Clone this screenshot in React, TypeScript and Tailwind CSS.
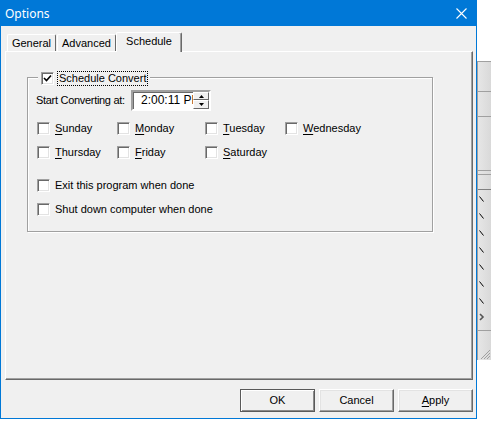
import React from 'react';

function Check({ checked = false }: { checked?: boolean }) {
    return (
        <span className="w-[13px] h-[13px] shrink-0 bg-white border border-t-[#a0a0a0] border-l-[#a0a0a0] border-r-white border-b-white shadow-[inset_1px_1px_0_#696969,inset_-1px_-1px_0_#e3e3e3] flex items-center justify-center">
            {checked && (
                <svg width="9" height="9" viewBox="0 0 9 9">
                    <path d="M1 4 L3.5 6.5 L8 1.5" stroke="#000" strokeWidth="1.6" fill="none" />
                </svg>
            )}
        </span>
    );
}

function Day({ first, rest }: { first: string; rest: string }) {
    return (
        <div className="flex items-center gap-[5px] h-[13px]">
            <Check />
            <span>
                <span className="underline underline-offset-[2px]">{first}</span>
                {rest}
            </span>
        </div>
    );
}

function Button({ children, isDefault = false }: { children: React.ReactNode; isDefault?: boolean }) {
    const edge = isDefault
        ? 'border border-[#5a5a5a] shadow-[inset_1px_1px_0_#fff,inset_-1px_-1px_0_#8a8a8a]'
        : 'border border-t-white border-l-white border-r-[#696969] border-b-[#696969] shadow-[inset_-1px_-1px_0_#a0a0a0,inset_1px_1px_0_#e3e3e3]';
    return (
        <div className={'w-[75px] h-[23px] flex items-center justify-center bg-[#f0f0f0] ' + edge}>{children}</div>
    );
}

export default function App() {
    return (
        <div className="w-[491px] h-[427px] bg-white flex items-start font-['Liberation_Sans',Arial,sans-serif] text-[11px] text-black">
            <div className="w-[477px] h-[419px] shrink-0 border border-[#0078d7] bg-[#f0f0f0] flex flex-col">
                <div className="h-[25px] bg-[#0078d7] flex items-center justify-between pl-[4px] pr-[9px] text-white text-[12px] font-['Noto_Sans',sans-serif]">
                    <span>Options</span>
                    <svg width="11" height="11" viewBox="0 0 11 11">
                        <path d="M0.5 0.5 L10.5 10.5 M10.5 0.5 L0.5 10.5" stroke="#fff" strokeWidth="1.1" />
                    </svg>
                </div>

                <div className="flex-1 pl-[4px] pr-[3px] pt-[6px] flex flex-col">
                    <div className="h-[20px] flex items-end pl-[2px] relative z-10">
                        <div className="w-[49px] h-[17px] mb-[1px] flex items-center justify-center border-t border-l border-white border-r border-r-[#696969] rounded-tl-[2px] rounded-tr-[2px]">
                            General
                        </div>
                        <div className="ml-[1px] w-[59px] h-[17px] mb-[1px] flex items-center justify-center border-t border-l border-white border-r border-r-[#696969] rounded-tl-[2px] rounded-tr-[2px]">
                            Advanced
                        </div>
                        <div className="w-[66px] h-[20px] pb-[3px] flex items-center justify-center bg-[#f0f0f0] border-t border-l border-white border-r border-r-[#696969] shadow-[inset_-1px_0_0_#a0a0a0] rounded-tl-[2px] rounded-tr-[2px]">
                            Schedule
                        </div>
                    </div>

                    <div className="-mt-[1px] h-[329px] border border-t-white border-l-white border-r-[#696969] border-b-[#696969] shadow-[inset_-1px_-1px_0_#a0a0a0] pl-[21px] pt-[25px]">
                        <div className="relative w-[406px] h-[155px] border border-[#a0a0a0] shadow-[1px_1px_0_#fff,inset_1px_1px_0_#fff] pl-[8px] pt-[12px]">
                            <div className="absolute left-[10px] -top-[7px] h-[15px] px-[3px] bg-[#f0f0f0] flex items-center gap-[4px]">
                                <Check checked />
                                <span className="px-[1px] leading-[13px] outline outline-1 outline-dotted outline-black">
                                    Schedule Convert
                                </span>
                            </div>

                            <div className="flex items-center h-[21px]">
                                <span className="w-[95px] shrink-0 whitespace-nowrap tracking-[-0.3px]">
                                    Start Converting at:
                                </span>
                                <div className="w-[80px] h-[21px] bg-white border-2 border-t-[#a0a0a0] border-l-[#a0a0a0] border-r-white border-b-white shadow-[inset_1px_1px_0_#696969] flex text-[12px]">
                                    <div className="flex-1 overflow-hidden whitespace-nowrap pl-[8px] leading-[17px]">
                                        2:00:11 PM
                                    </div>
                                    <div className="w-[16px] flex flex-col">
                                        <div className="h-[8px] flex items-center justify-center border border-t-white border-l-white border-r-[#696969] border-b-[#696969] bg-[#f0f0f0]">
                                            <svg width="5" height="3" viewBox="0 0 5 3">
                                                <path d="M2.5 0 L5 3 L0 3 Z" fill="#000" />
                                            </svg>
                                        </div>
                                        <div className="h-[9px] flex items-center justify-center border border-t-white border-l-white border-r-[#696969] border-b-[#696969] bg-[#f0f0f0]">
                                            <svg width="5" height="3" viewBox="0 0 5 3">
                                                <path d="M0 0 L5 0 L2.5 3 Z" fill="#000" />
                                            </svg>
                                        </div>
                                    </div>
                                </div>
                            </div>

                            <div className="mt-[11px] pl-[1px] grid grid-cols-[80px_88px_80px_auto] gap-y-[11px]">
                                <Day first="S" rest="unday" />
                                <Day first="M" rest="onday" />
                                <Day first="T" rest="uesday" />
                                <Day first="W" rest="ednesday" />
                                <Day first="T" rest="hursday" />
                                <Day first="F" rest="riday" />
                                <Day first="S" rest="aturday" />
                            </div>

                            <div className="mt-[20px] pl-[1px] flex flex-col gap-[11px]">
                                <div className="flex items-center gap-[5px] h-[13px]">
                                    <Check />
                                    <span>Exit this program when done</span>
                                </div>
                                <div className="flex items-center gap-[5px] h-[13px]">
                                    <Check />
                                    <span>Shut down computer when done</span>
                                </div>
                            </div>
                        </div>
                    </div>

                    <div className="mt-[9px] flex justify-end gap-[4px]">
                        <Button isDefault>OK</Button>
                        <Button>Cancel</Button>
                        <Button>
                            <span>
                                <span className="underline underline-offset-[2px]">A</span>pply
                            </span>
                        </Button>
                    </div>
                </div>
            </div>

            {/* part of a window lying behind the dialog */}
            <div className="mt-[61px] w-[14px] h-[299px] border-l border-t border-[#a0a0a0] bg-gradient-to-r from-[#e6e6e6] to-[#d9d9d9] flex flex-col">
                <div className="h-[30px] border-b border-[#a0a0a0]" />
                <div className="h-[25px] border-b border-[#a0a0a0]" />
                <div className="h-[54px] border-b border-[#a0a0a0]" />
                <div className="h-[4px] border-b border-[#a0a0a0]" />
                <div className="h-[15px] border-b border-[#808080]" />
                <div className="flex flex-col gap-[11px] pt-[6px] pl-[1px]">
                    {[0, 1, 2, 3, 4, 5, 6].map((i) => (
                        <svg key={i} width="6" height="6" viewBox="0 0 6 6">
                            <path d="M0.5 0.5 L4.5 5.5" stroke="#000" strokeWidth="1" />
                        </svg>
                    ))}
                </div>
                <div className="mt-[9px] pl-[1px] h-[10px]">
                    <svg width="6" height="8" viewBox="0 0 6 8">
                        <path d="M1 1 L4 4 L1 7" stroke="#555" strokeWidth="1.6" fill="none" />
                    </svg>
                </div>
                <div className="mt-[2px] h-[6px] border-b border-[#a0a0a0]" />
                <div className="flex-1 flex items-end justify-end">
                    <svg width="12" height="12" viewBox="0 0 12 12">
                        <path d="M11 2 L2 11 M11 5 L5 11 M11 8 L8 11" stroke="#a0a0a0" strokeWidth="1" />
                    </svg>
                </div>
            </div>
        </div>
    );
}
